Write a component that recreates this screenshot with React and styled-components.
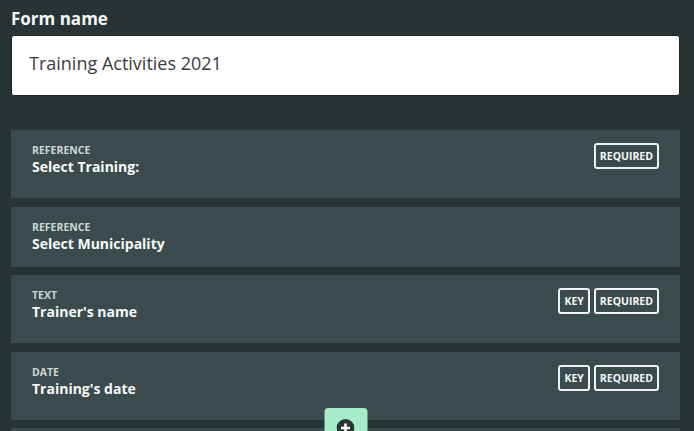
import React from "react";
import styled, { createGlobalStyle } from "styled-components";

const GlobalStyle = createGlobalStyle`
  html, body {
    margin: 0;
    padding: 0;
    background: #283334;
    font-family: "Open Sans", "Noto Sans", sans-serif;
    overflow: hidden;
  }
`;

const Page = styled.div`
  padding: 8px 14px 0 11px;
  display: flex;
  flex-direction: column;
`;

const Heading = styled.h2`
  margin: 0 0 5px 0;
  font-size: 17px;
  line-height: 22px;
  font-weight: 700;
  color: #f4f7f7;
`;

const NameInput = styled.input`
  box-sizing: border-box;
  width: 100%;
  height: 61px;
  padding: 0 17px 5px;
  border: 1px solid #1c2526;
  border-radius: 3px;
  background: #ffffff;
  color: #3a3d3e;
  font-family: inherit;
  font-size: 18px;
  outline: none;
`;

const FieldList = styled.div`
  margin-top: 34px;
  display: flex;
  flex-direction: column;
  gap: 8.5px;
`;

const Slot = styled.div`
  position: relative;
`;

const Card = styled.div`
  display: flex;
  justify-content: space-between;
  align-items: flex-start;
  min-height: 34px;
  padding: 13px 21px;
  background: #3b4a4d;
`;

const Info = styled.div`
  display: flex;
  flex-direction: column;
`;

const Kind = styled.span`
  font-size: 10.5px;
  line-height: 14px;
  font-weight: 700;
  color: #cdd7d5;
  text-transform: uppercase;
`;

const Title = styled.span`
  font-size: 14px;
  line-height: 20px;
  font-weight: 700;
  color: #f7f9f9;
`;

const Badges = styled.div`
  display: flex;
  gap: 4px;
  margin-bottom: 16px;
`;

const Badge = styled.span`
  box-sizing: border-box;
  height: 26px;
  display: flex;
  align-items: center;
  padding: 0 4px;
  border: 2px solid #eef2f2;
  border-radius: 3px;
  font-size: 10.5px;
  font-weight: 700;
  color: #f4f7f7;
`;

const AddButton = styled.button`
  position: absolute;
  z-index: 2;
  left: 50%;
  top: calc(100% - 12px);
  transform: translateX(-50%);
  width: 43px;
  height: 40px;
  padding: 11px 0 0;
  border: none;
  border-radius: 4px;
  background: #a7ecc9;
  display: flex;
  justify-content: center;
  align-items: flex-start;
  cursor: pointer;
`;

const fields = [
  { kind: "Reference", title: "Select Training:", badges: ["REQUIRED"] },
  { kind: "Reference", title: "Select Municipality", badges: [] },
  { kind: "Text", title: "Trainer's name", badges: ["KEY", "REQUIRED"] },
  { kind: "Date", title: "Training's date", badges: ["KEY", "REQUIRED"], add: true },
  { badges: [] },
];

const PlusIcon = () => (
  <svg width="18" height="18" viewBox="0 0 18 18">
    <circle cx="9" cy="9" r="9" fill="#2a3435" />
    <path d="M9 4.5v9M4.5 9h9" stroke="#ffffff" strokeWidth="2.6" />
  </svg>
);

export default function App() {
  return (
    <Page>
      <GlobalStyle />
      <Heading>Form name</Heading>
      <NameInput defaultValue="Training Activities 2021" />
      <FieldList>
        {fields.map((f, i) => (
          <Slot key={i}>
            <Card>
              {f.title && (
                <Info>
                  <Kind>{f.kind}</Kind>
                  <Title>{f.title}</Title>
                </Info>
              )}
              {f.badges.length > 0 && (
                <Badges>
                  {f.badges.map((b) => (
                    <Badge key={b}>{b}</Badge>
                  ))}
                </Badges>
              )}
            </Card>
            {f.add && (
              <AddButton aria-label="add field">
                <PlusIcon />
              </AddButton>
            )}
          </Slot>
        ))}
      </FieldList>
    </Page>
  );
}
